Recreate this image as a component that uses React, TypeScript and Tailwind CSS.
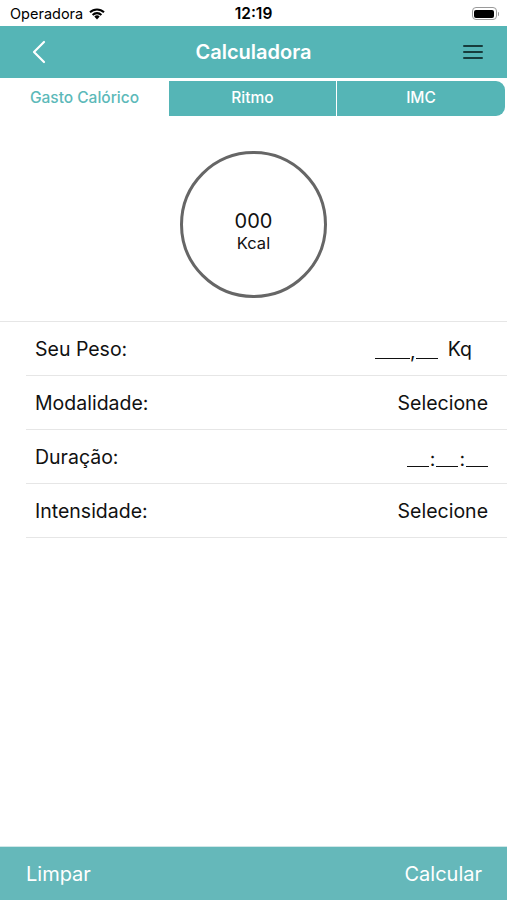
import React from "react";

function Wifi() {
  return (
    <svg width="18" height="13" viewBox="0 0 18 13">
      <path d="M9 12.5 L6.3 9.6 A3.9 3.9 0 0 1 11.7 9.6 Z" fill="#000" />
      <path d="M3.9 7.2 A7.3 7.3 0 0 1 14.1 7.2 L12.7 8.7 A5.3 5.3 0 0 0 5.3 8.7 Z" fill="#000" />
      <path d="M1.3 4.6 A11 11 0 0 1 16.7 4.6 L15.3 6.1 A9 9 0 0 0 2.7 6.1 Z" fill="#000" />
    </svg>
  );
}

function Battery() {
  return (
    <div className="flex items-center">
      <div className="w-[25px] h-[13px] rounded-[4px] border border-[#9a9a9a] p-[1.5px]">
        <div className="w-full h-full rounded-[2px] bg-black" />
      </div>
      <div className="w-[1.5px] h-[4px] bg-[#9a9a9a] rounded-r-sm ml-[1px]" />
    </div>
  );
}

function Blank({ w }: { w: number }) {
  return <span className="inline-block h-[1.5px] bg-[#111] translate-y-[9px]" style={{ width: w }} />;
}

function Row({ label, value }: { label: string; value: React.ReactNode }) {
  return (
    <div className="ml-[26px] border-b border-[#e6e6e6] h-[54px] flex items-center justify-between pl-[9px] pr-[19px] pt-[3px]">
      <span className="text-[19.5px] text-[#111]">{label}</span>
      <span className="text-[19.5px] text-[#111]">{value}</span>
    </div>
  );
}

export default function App() {
  return (
    <div
      className="w-[507px] h-[900px] bg-white flex flex-col overflow-hidden"
      style={{ fontFamily: "Inter, 'Noto Sans', sans-serif" }}
    >
      {/* status bar */}
      <div className="h-[26px] flex items-center justify-between pl-[10px] pr-[8px] pt-[1px] relative">
        <div className="flex items-center gap-[5px]">
          <span className="text-[14.5px] text-black">Operadora</span>
          <Wifi />
        </div>
        <span className="absolute left-1/2 -translate-x-1/2 text-[15.5px] font-semibold text-black">12:19</span>
        <Battery />
      </div>

      {/* header */}
      <div className="h-[52px] bg-[#55b5b6] flex items-center justify-between pl-[32px] pr-[24px] relative">
        <svg width="14" height="24" viewBox="0 0 14 24">
          <path d="M12 2 L2 12 L12 22" stroke="#fff" strokeWidth="2.2" fill="none" strokeLinecap="round" strokeLinejoin="round" />
        </svg>
        <span className="absolute left-1/2 -translate-x-1/2 text-[20px] font-semibold text-white">Calculadora</span>
        <svg width="20" height="16" viewBox="0 0 20 16">
          <path d="M1 2 H19 M1 8 H19 M1 14 H19" stroke="#173c3c" strokeWidth="2" strokeLinecap="round" />
        </svg>
      </div>

      {/* tabs */}
      <div className="h-[1.5px] bg-white" />
      <div className="h-[36px] flex pr-[2px] pt-[1px]">
        <div className="w-[169px] flex items-center justify-center text-[15.5px] font-medium text-[#5cb9b9]">
          Gasto Calórico
        </div>
        <div className="w-[168px] bg-[#55b5b6] flex items-center justify-center text-[15.5px] font-medium text-white border-r border-white">
          Ritmo
        </div>
        <div className="flex-1 bg-[#55b5b6] rounded-r-[9px] flex items-center justify-center text-[15.5px] font-medium text-white">
          IMC
        </div>
      </div>

      {/* circle */}
      <div className="h-[206px] flex items-center justify-center border-b border-[#e6e6e6]">
        <div className="w-[147px] h-[147px] rounded-full border-[3px] border-[#666] flex flex-col items-center justify-center mt-[12px]">
          <span className="text-[20px] leading-[22px] text-[#111] mt-[16px]">000</span>
          <span className="text-[16.5px] leading-[22px] text-[#111]">Kcal</span>
        </div>
      </div>

      {/* form rows */}
      <div className="flex flex-col">
        <Row
          label="Seu Peso:"
          value={
            <span className="flex items-center">
              <Blank w={35} />
              <span className="translate-y-[2px]">,</span>
              <Blank w={22} />
              <span className="ml-[10px] mr-[16px]">Kq</span>
            </span>
          }
        />
        <Row label="Modalidade:" value="Selecione" />
        <Row
          label="Duração:"
          value={
            <span className="flex items-center">
              <Blank w={22} />
              <span className="mx-[1px] translate-y-[2px]">:</span>
              <Blank w={22} />
              <span className="mx-[1px] translate-y-[2px]">:</span>
              <Blank w={22} />
            </span>
          }
        />
        <Row label="Intensidade:" value="Selecione" />
      </div>

      <div className="flex-1" />

      {/* bottom bar */}
      <div className="h-[54px] bg-[#65b8ba] border-t border-[#cfe7e8] flex items-center justify-between pl-[26px] pr-[25px]">
        <span className="text-[20px] text-white">Limpar</span>
        <span className="text-[20px] text-white">Calcular</span>
      </div>
    </div>
  );
}
